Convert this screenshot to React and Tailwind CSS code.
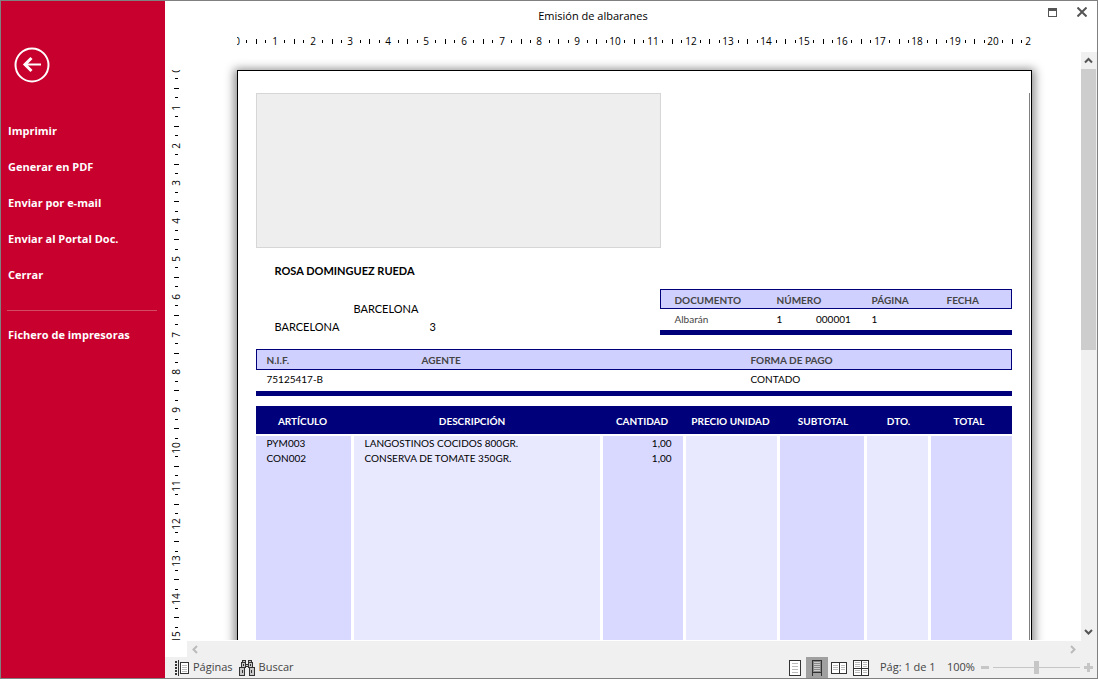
const MENU = ['Imprimir', 'Generar en PDF', 'Enviar por e-mail', 'Enviar al Portal Doc.', 'Cerrar'];

const COLUMNS = [
  { label: 'ARTÍCULO', width: 'w-[98px]', head: 'pr-1', tone: 'bg-[#d9d9ff]' },
  { label: 'DESCRIPCIÓN', width: 'w-[249px]', head: 'pr-3', tone: 'bg-[#e8e8ff]' },
  { label: 'CANTIDAD', width: 'w-[83px]', head: 'pr-1', tone: 'bg-[#d9d9ff]' },
  { label: 'PRECIO UNIDAD', width: 'w-[94px]', head: 'pr-1', tone: 'bg-[#e8e8ff]' },
  { label: 'SUBTOTAL', width: 'w-[87px]', head: '', tone: 'bg-[#d9d9ff]' },
  { label: 'DTO.', width: 'w-[64px]', head: '', tone: 'bg-[#e8e8ff]' },
  { label: 'TOTAL', width: 'w-[81px]', head: 'pr-1', tone: 'bg-[#d9d9ff]' },
];

const LINES = [
  ['PYM003', 'LANGOSTINOS COCIDOS 800GR.', '1,00', '', '', '', ''],
  ['CON002', 'CONSERVA DE TOMATE 350GR.', '1,00', '', '', '', ''],
];

const PX_PER_CM = 37.8;

function Ruler({ vertical, length }) {
  const marks = [];
  const count = Math.ceil((length / PX_PER_CM) * 4);
  for (let i = 0; i <= count; i += 1) {
    const pos = Math.round((i * PX_PER_CM) / 4);
    if (i % 4 === 0) {
      marks.push(
        vertical ? (
          <text key={i} transform={`translate(15 ${pos}) rotate(-90)`} textAnchor="middle">
            {i / 4}
          </text>
        ) : (
          <text key={i} x={pos} y={12} textAnchor="middle">
            {i / 4}
          </text>
        ),
      );
    } else {
      const half = i % 4 === 2;
      const size = half ? 5 : 3;
      const start = half ? 6 : 7;
      marks.push(
        vertical ? (
          <rect key={i} x={start + 3} y={pos - 1} width={size} height={1} />
        ) : (
          <rect key={i} x={pos} y={start} width={1} height={size} />
        ),
      );
    }
  }
  return (
    <svg
      width={vertical ? 22 : length}
      height={vertical ? length : 18}
      className="block shrink-0 fill-black font-['Open_Sans',sans-serif] text-[10px]"
      aria-hidden="true"
    >
      {marks}
    </svg>
  );
}

function Chevron({ d, className }) {
  return (
    <svg width="9" height="9" viewBox="0 0 9 9" fill="none" strokeWidth="2" className={className} aria-hidden="true">
      <path d={d} />
    </svg>
  );
}

function PagesIcon() {
  return (
    <svg width="14" height="16" viewBox="0 0 14 16" shapeRendering="crispEdges" aria-hidden="true">
      <path d="M0 1h2v2H0zM0 4h2v2H0zM0 7h2v2H0zM0 10h2v2H0zM0 13h2v2H0zM3 0h1v16H3z" fill="#333" />
      <rect x="5.5" y="2.5" width="8" height="11" fill="#fff" stroke="#333" />
      <path d="M7 5.500h5M7 7.500h5M7 9.500h5M7 11.500h5" stroke="#bbb" />
    </svg>
  );
}

function BinocularsIcon() {
  return (
    <svg width="16" height="16" viewBox="0 0 16 16" shapeRendering="crispEdges" fill="#c8c8c8" stroke="#333" aria-hidden="true">
      <rect x="3.500" y="0.500" width="3" height="3" />
      <rect x="9.500" y="0.500" width="3" height="3" />
      <rect x="2.500" y="2.500" width="4" height="5" />
      <rect x="9.500" y="2.500" width="4" height="5" />
      <rect x="6.500" y="4.500" width="3" height="2" />
      <rect x="0.500" y="7.500" width="5" height="8" />
      <rect x="10.500" y="7.500" width="5" height="8" />
      <path d="M3.500 10v3M12.500 10v3M4.500 4v2M11.500 4v2" />
    </svg>
  );
}

function SinglePageIcon() {
  return (
    <svg width="12" height="16" viewBox="0 0 12 16" shapeRendering="crispEdges" className="block" aria-hidden="true">
      <rect x="0.5" y="0.5" width="11" height="15" fill="#fff" stroke="#333" />
      <path d="M3 3.500h6M3 6.500h6M3 9.500h6M3 12.500h6" stroke="#bbb" />
    </svg>
  );
}

function ContinuousIcon() {
  return (
    <svg width="10" height="16" viewBox="0 0 10 16" shapeRendering="crispEdges" className="block" aria-hidden="true">
      <rect x="0.5" y="0.500" width="9" height="12" fill="#888" stroke="#333" />
      <path d="M2 2.500h6M2 4.500h6M2 6.500h6M2 8.500h6M2 10.500h6" stroke="#ccc" />
      <path d="M0.500 12v4M9.500 12v4" stroke="#333" />
    </svg>
  );
}

function FacingIcon() {
  return (
    <svg width="16" height="12" viewBox="0 0 16 12" shapeRendering="crispEdges" className="block" aria-hidden="true">
      <rect x="0.5" y="0.5" width="15" height="11" fill="#fff" stroke="#333" />
      <path d="M8.500 0v12" stroke="#333" />
      <path d="M2 3.500h5M2 5.500h5M2 7.500h5M10 3.500h4M10 5.500h4M10 7.500h4" stroke="#bbb" />
    </svg>
  );
}

function FourPagesIcon() {
  return (
    <svg width="16" height="16" viewBox="0 0 16 16" shapeRendering="crispEdges" className="block" aria-hidden="true">
      <rect x="0.5" y="0.5" width="15" height="15" fill="#fff" stroke="#333" />
      <path d="M8.500 0v16M0 8.500h16" stroke="#333" />
      <path d="M2 2.500h5M2 4.500h5M2 6.500h5M10 2.500h4M10 4.500h4M10 6.500h4M2 10.500h5M2 12.500h5M10 10.500h4M10 12.500h4" stroke="#bbb" />
    </svg>
  );
}

function Sidebar() {
  return (
    <aside className="flex w-[164px] shrink-0 flex-col bg-[#c8002d] pt-[46px] pr-2 pl-1.5 text-[11px] font-bold text-white">
      <button type="button" aria-label="Volver" className="ml-[7px] size-9">
        <svg width="36" height="36" viewBox="0 0 36 36" fill="none" stroke="#fff" aria-hidden="true">
          <circle cx="18" cy="18" r="16.500" strokeWidth="2" />
          <path d="M10 17.500h17" strokeWidth="2" />
          <path d="M17.500 11l-6.500 6.500 6.500 6.500" strokeWidth="3" />
        </svg>
      </button>
      <nav className="mt-[30px] flex flex-col">
        {MENU.map((label) => (
          <button key={label} type="button" className="h-9 pl-px text-left">
            {label}
          </button>
        ))}
        <hr className="mt-[17px] mb-1.5 border-[#d34a64]" />
        <button type="button" className="h-9 pl-px text-left">
          Fichero de impresoras
        </button>
      </nav>
    </aside>
  );
}

function DeliveryNote() {
  return (
    <article className="mx-auto flex min-h-[1123px] w-[795px] shrink-0 border border-black bg-white pt-[22px] pl-[18px] font-[Lato,sans-serif] text-[10px] text-black shadow-[0_2px_9px_3px_rgba(0,0,0,0.45)]">
      <div className="w-[756px]">
        <div className="h-[155px] w-[405px] border border-[#d6d6d6] bg-[#eee]" />

        <div className="flex justify-between">
          <div className="pt-[14px] pl-[19px] text-[11px] leading-[18px]">
            <p className="font-bold">ROSA DOMINGUEZ RUEDA</p>
            <p className="mt-5 pl-[79px]">BARCELONA</p>
            <p className="flex">
              <span className="w-[155px]">BARCELONA</span>
              <span>3</span>
            </p>
          </div>
          <table className="mt-[41px] w-[352px] table-fixed border-separate border-spacing-0 self-start border-b-5 border-[#00007b] text-left">
            <thead>
              <tr className="h-5 bg-[#d0d0ff] font-bold text-[#444]">
                <th className="w-[117px] border-y border-l border-[#00007b] p-0 pt-0.5 pl-[14px]">DOCUMENTO</th>
                <th className="w-[95px] border-y border-[#00007b] p-0 pt-0.5" colSpan="2">NÚMERO</th>
                <th className="w-[75px] border-y border-[#00007b] p-0 pt-0.5">PÁGINA</th>
                <th className="border-y border-r border-[#00007b] p-0 pt-0.5">FECHA</th>
              </tr>
            </thead>
            <tbody>
              <tr className="h-[21px]">
                <td className="p-0 pl-[15px] text-[#444]">Albarán</td>
                <td className="p-0">1</td>
                <td className="p-0 pr-[23px] text-right"><span className="-ml-2 pr-2">000001</span></td>
                <td className="p-0">1</td>
                <td className="p-0" />
              </tr>
            </tbody>
          </table>
        </div>

        <table className="mt-[13px] w-full table-fixed border-separate border-spacing-0 border-b-5 border-[#00007b] text-left">
          <thead>
            <tr className="h-[21px] bg-[#d0d0ff] font-bold text-[#444]">
              <th className="w-[166px] border-y border-l border-[#00007b] p-0 pt-0.5 pl-[10px]">N.I.F.</th>
              <th className="w-[329px] border-y border-[#00007b] p-0 pt-0.5">AGENTE</th>
              <th className="border-y border-r border-[#00007b] p-0 pt-0.5">FORMA DE PAGO</th>
            </tr>
          </thead>
          <tbody>
            <tr className="h-[21px]">
              <td className="p-0 pb-0.5 pl-[11px]">75125417-B</td>
              <td className="p-0" />
              <td className="p-0 pb-0.5">CONTADO</td>
            </tr>
          </tbody>
        </table>

        <table className="mt-[10px] w-full table-fixed border-separate border-spacing-0 text-left leading-[15px]">
          <thead>
            <tr className="h-[28px] bg-[#00007b] text-white">
              {COLUMNS.map((c) => (
                <th key={c.label} className={`${c.width} ${c.head} p-0 pt-[3px] text-center font-bold whitespace-nowrap`}>
                  {c.label}
                </th>
              ))}
            </tr>
            <tr className="h-[2px]" />
          </thead>
          <tbody>
            {LINES.map((line) => (
              <tr key={line[0]} className="h-[15px]">
                {line.map((value, i) => (
                  <td
                    key={COLUMNS[i].label}
                    className={`${COLUMNS[i].tone} border-white p-0 pl-[11px] ${i < 6 ? 'border-r-3' : ''} ${i === 2 ? 'pr-[11px] text-right' : ''}`}
                  >
                    {value}
                  </td>
                ))}
              </tr>
            ))}
            <tr className="h-[600px]">
              {COLUMNS.map((c, i) => (
                <td key={c.label} className={`${c.tone} border-white p-0 ${i < 6 ? 'border-r-3' : ''}`} />
              ))}
            </tr>
          </tbody>
        </table>
      </div>
      <div className="ml-[17px] w-px bg-[#808080]" />
    </article>
  );
}

function StatusBar() {
  return (
    <footer className="flex h-[21px] shrink-0 items-center bg-[#f0f0f0] pr-1 pl-[10px] text-[11px] text-[#444]">
      <button type="button" className="flex items-center gap-1">
        <PagesIcon />
        Páginas
      </button>
      <button type="button" className="ml-1.5 flex items-center gap-1">
        <BinocularsIcon />
        Buscar
      </button>
      <div className="ml-auto flex h-full items-center">
        <button type="button" aria-label="Una página" className="mr-[5px]">
          <SinglePageIcon />
        </button>
        <button type="button" aria-label="Continuo" className="flex h-full w-[22px] items-center justify-center bg-[#a0a0a0]">
          <ContinuousIcon />
        </button>
        <button type="button" aria-label="Páginas enfrentadas" className="ml-[3px]">
          <FacingIcon />
        </button>
        <button type="button" aria-label="Varias páginas" className="ml-1.5">
          <FourPagesIcon />
        </button>
      </div>
      <span className="ml-[11px] w-[67px] whitespace-nowrap">Pág: 1 de 1</span>
      <span className="w-[34px]">100%</span>
      <button type="button" aria-label="Reducir" className="w-2">
        <span className="block h-[3px] bg-[#c6c6c6]" />
      </button>
      <input
        type="range"
        aria-label="Zoom"
        defaultValue="50"
        className="mx-1 h-[14px] w-[87px] appearance-none bg-transparent [&::-webkit-slider-runnable-track]:h-px [&::-webkit-slider-runnable-track]:bg-[#c6c6c6] [&::-webkit-slider-thumb]:-mt-1.5 [&::-webkit-slider-thumb]:h-[13px] [&::-webkit-slider-thumb]:w-[5px] [&::-webkit-slider-thumb]:appearance-none [&::-webkit-slider-thumb]:bg-[#c6c6c6]"
      />
      <button type="button" aria-label="Ampliar">
        <svg width="9" height="9" viewBox="0 0 9 9" fill="#c6c6c6" shapeRendering="crispEdges" className="block" aria-hidden="true">
          <path d="M3 0h3v3h3v3H6v3H3V6H0V3h3z" />
        </svg>
      </button>
    </footer>
  );
}

export default function App() {
  return (
    <div className="flex h-screen overflow-hidden border border-[#808080] bg-white font-['Open_Sans',sans-serif]">
      <Sidebar />
      <main className="flex min-w-0 flex-1 flex-col">
        <header className="flex h-[31px] shrink-0 items-start">
          <h1 className="flex-1 pt-1.5 text-center text-[11px] leading-[18px] text-black">Emisión de albaranes</h1>
          <div className="flex w-[76px] items-center gap-5 pt-1.5 pl-[27px]">
            <button type="button" aria-label="Maximizar">
              <svg width="9" height="9" viewBox="0 0 9 9" shapeRendering="crispEdges" className="block" aria-hidden="true">
                <path d="M0 0h9v9H0zM1 3v5h7V3z" fill="#555" fillRule="evenodd" />
              </svg>
            </button>
            <button type="button" aria-label="Cerrar ventana">
              <svg width="10" height="10" viewBox="0 0 10 10" stroke="#555" strokeWidth="2" className="block" aria-hidden="true">
                <path d="M.5.5l9 9M9.500.5l-9 9" />
              </svg>
            </button>
          </div>
        </header>

        <div className="flex h-5 shrink-0 justify-center overflow-hidden pr-4 pl-[22px] pt-px">
          <Ruler length={795} />
        </div>

        <div className="flex min-h-0 flex-1">
          <div className="w-[22px] shrink-0 pt-[18px] pb-[17px]">
            <div className="h-full overflow-hidden">
              <Ruler vertical length={1123} />
            </div>
          </div>
          <div className="flex min-w-0 flex-1 flex-col">
            <div className="min-h-0 flex-1 overflow-hidden pt-[18px]">
              <DeliveryNote />
            </div>
            <div className="mt-px flex h-4 shrink-0 items-center justify-between bg-[#f0f0f0] px-1">
              <button type="button" aria-label="Desplazar a la izquierda">
                <Chevron d="M6 1L2.500 4.500L6 8" className="block stroke-[#bbb]" />
              </button>
              <button type="button" aria-label="Desplazar a la derecha">
                <Chevron d="M3 1l3.500 3.500L3 8" className="block stroke-[#bbb]" />
              </button>
            </div>
          </div>
          <div className="flex w-4 shrink-0 flex-col items-center bg-[#f0f0f0] pr-px pb-[17px]">
            <button type="button" aria-label="Desplazar arriba" className="flex h-[17px] shrink-0 items-center">
              <Chevron d="M1 6.500L4.500 3L8 6.500" className="block stroke-[#555]" />
            </button>
            <div className="h-[281px] w-[15px] bg-[#cdcdcd]" />
            <button type="button" aria-label="Desplazar abajo" className="mt-auto flex h-[17px] shrink-0 items-center">
              <Chevron d="M1 3l3.500 3.500L8 3" className="block stroke-[#555]" />
            </button>
          </div>
        </div>
        <StatusBar />
      </main>
    </div>
  );
}
